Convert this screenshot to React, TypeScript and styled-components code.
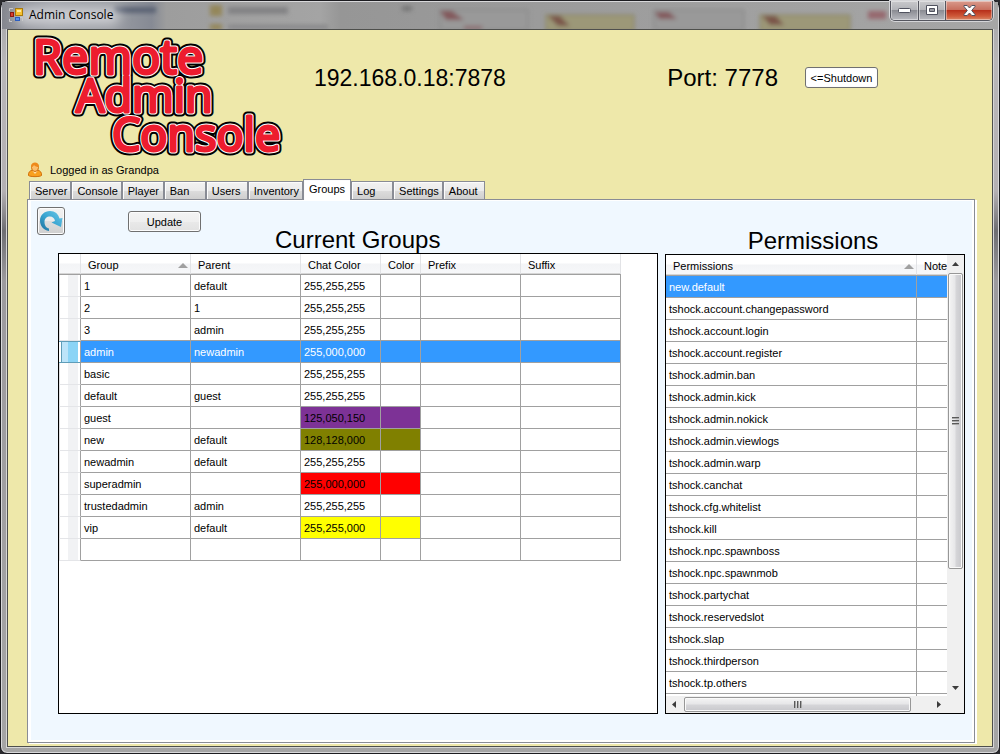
import React, { useState } from "react";
import styled, { createGlobalStyle, css } from "styled-components";

const GlobalStyle = createGlobalStyle`
  *, *::before, *::after { box-sizing: border-box; }
  body {
    margin: 0;
    background: #2a2a2e;
    font: 11px/14px "Liberation Sans", Arial, sans-serif;
    color: #000;
  }
  button { font: inherit; color: inherit; margin: 0; }
`;

const line = "#a0a0a0";

const Window = styled.div`
  position: relative;
  height: 100vh;
  min-height: 480px;
  display: flex;
  flex-direction: column;
  padding: 0 6px 6px;
  border: 1px solid #1c1c20;
  border-radius: 8px 8px 7px 7px;
  box-shadow: inset 0 0 0 1px #d8d8da;
  background: linear-gradient(180deg, #a3a3a5 0, #b8b6b8 60px, #b4b0b3 190px, #6e6e72 230px, #9c9a9e 280px, #a5a5a5 100%);
`;

const TitleBar = styled.header`
  position: relative;
  flex: none;
  height: 28px;
  margin: 0 -5px;
  padding: 0 5px 0 6px;
  display: flex;
  align-items: flex-start;
`;

const Glass = styled.svg`
  position: absolute;
  top: 1px;
  left: 0;
  width: 100%;
  height: 27px;
`;

const AppIcon = styled.svg`
  position: relative;
  width: 16px;
  height: 16px;
  margin-top: 6px;
`;

const WindowTitle = styled.h1`
  position: relative;
  flex: 1;
  margin: 5px 0 0 5px;
  font: 12px/18px "Open Sans", "Noto Sans", sans-serif;
`;

const CaptionButtons = styled.div`
  position: relative;
  display: flex;
  height: 20px;
  border: 1px solid #55565f;
  border-top: 0;
  border-radius: 0 0 5px 5px;
  box-shadow: 0 0 0 1px #d5d5d8;
  overflow: hidden;
`;

const CaptionButton = styled.button<{ $close?: boolean }>`
  display: flex;
  align-items: center;
  justify-content: center;
  width: ${(p) => (p.$close ? 47 : 27)}px;
  height: 19px;
  padding: 0;
  border: 0;
  background: linear-gradient(#c9c9cc 0, #b2b3b8 47%, #8b8c93 50%, #b9bac0 100%);
  box-shadow: inset 0 0 0 1px rgba(255, 255, 255, 0.4);
  & + & { border-left: 1px solid #55565f; }
  ${(p) => p.$close && css`
    background: linear-gradient(#d99a8c 0, #c8705f 45%, #b8311c 50%, #cf5a3a 80%, #d98a6a 100%);
  `}
`;

const Client = styled.main`
  flex: 1;
  min-height: 0;
  display: flex;
  flex-direction: column;
  padding: 0 17px 3px 19px;
  border: 1px solid #4e4f4c;
  box-shadow: 0 0 0 1px #d6d6d6;
  background: #eee8aa;
`;

const Banner = styled.section`
  flex: none;
  display: flex;
  align-items: flex-start;
  padding: 2px 97px 0 5px;
`;

const Logo = styled.svg`
  flex: none;
  width: 254px;
  height: 126px;
  overflow: visible;
  text {
    font-family: "Open Sans", "Noto Sans", sans-serif;
    font-size: 45px;
    font-weight: 400;
  }
  text:first-child { font-size: 47px; }
`;

const Address = styled.div`
  margin: 32px 0 0 28px;
  font-size: 23px;
  line-height: 28px;
`;

const Port = styled.div`
  margin: 32px 27px 0 auto;
  font-size: 24px;
  line-height: 28px;
  white-space: nowrap;
`;

const PushButton = styled.button<{ $light?: boolean }>`
  min-width: 73px;
  height: 21px;
  padding: 0 4px;
  border: 1px solid #707070;
  border-radius: 3px;
  box-shadow: inset 0 0 0 1px #fcfcfc;
  background: ${(p) => (p.$light ? "#fff" : "linear-gradient(#f4f4f4 0, #efefef 50%, #e9e9e9 51%, #e2e2e2 100%)")};
  white-space: nowrap;
`;

const ShutdownButton = styled(PushButton)`
  margin-top: 35px;
`;

const UserLine = styled.div`
  flex: none;
  display: flex;
  align-items: center;
  gap: 7px;
  height: 15px;
  margin-top: 4px;
`;

const Tabs = styled.div`
  flex: none;
  display: flex;
  align-items: flex-end;
  height: 22px;
  padding: 0 2px;
  position: relative;
  z-index: 1;
`;

const Tab = styled.button<{ $active: boolean }>`
  min-width: 42px;
  height: 18px;
  padding: 1px 3px 0 5px;
  border: 1px solid #898c95;
  border-bottom: 0;
  background: linear-gradient(#f2f2f2 0, #ebebeb 50%, #dddddd 51%, #cfcfcf 100%);
  box-shadow: inset 1px 1px 0 #fcfcfc;
  text-align: left;
  line-height: 17px;
  ${(p) => p.$active && css`
    height: 21px;
    padding: 0 5px 2px;
    margin-bottom: -1px;
    background: #fff;
  `}
`;

const TabPage = styled.section`
  flex: 1;
  min-height: 0;
  display: grid;
  grid-template-columns: minmax(0, 621fr) minmax(0, 300fr);
  column-gap: 7px;
  padding: 4px 9px 28px;
  border: 1px solid #898c95;
  box-shadow: inset 3px 0 0 #fff, inset -2px -2px 0 #fff, inset 0 1px 0 #fff, 2px 1px 0 #fff;
  background: #f0f8ff;
`;

const Pane = styled.section`
  min-width: 0;
  min-height: 0;
  display: flex;
  flex-direction: column;
`;

const PaneHead = styled.div<{ $center?: boolean }>`
  flex: none;
  display: flex;
  align-items: flex-start;
  height: 49px;
  padding-top: 3px;
  ${(p) => p.$center && css`
    justify-content: center;
    height: 50px;
    padding-right: 4px;
  `}
`;

const Heading = styled.h2`
  align-self: flex-end;
  margin: 0;
  font-size: 24px;
  line-height: 27px;
  font-weight: 400;
  white-space: nowrap;
`;

const RefreshButton = styled.button`
  width: 28px;
  height: 28px;
  padding: 0;
  display: flex;
  align-items: center;
  justify-content: center;
  border: 1px solid #707070;
  border-radius: 3px;
  box-shadow: inset 0 0 0 1px #fcfcfc;
  background: linear-gradient(#f2f2f2 0, #ebebeb 50%, #dddddd 51%, #cfcfcf 100%);
`;

const UpdateButton = styled(PushButton)`
  margin: 4px 74px 0 63px;
`;

const GridBox = styled.div<{ $indent?: boolean }>`
  flex: 1;
  min-height: 0;
  margin-left: ${(p) => (p.$indent ? 21 : 0)}px;
  border: 1px solid #000;
  background: #fff;
  overflow: hidden;
`;

const DataTable = styled.table<{ $width: number }>`
  width: ${(p) => p.$width}px;
  table-layout: fixed;
  border-collapse: separate;
  border-spacing: 0;
`;

const HeadCell = styled.th`
  position: relative;
  height: 21px;
  padding: 1px 7px 0;
  border-bottom: 1px solid ${line};
  box-shadow: inset -1px 0 0 #e2e3e6, inset 0 -1px 0 #d5d5d5;
  background: linear-gradient(#fff 0, #fff 45%, #f3f4f6 50%, #f7f8fa 100%);
  font-weight: 400;
  text-align: left;
  white-space: nowrap;
`;

const SortMark = styled.svg`
  position: absolute;
  right: 3px;
  top: 9px;
  width: 10px;
  height: 5px;
`;

const RowHead = styled.th<{ $selected?: boolean }>`
  padding: 0;
  border-right: 1px solid ${line};
  border-bottom: 1px solid #e4e5e8;
  background: linear-gradient(90deg, #e0e0e2 0, #e0e0e2 1px, #fff 1px, #fff 9px, #f1f2f4 9px, #f1f2f4 19px, #fff 19px);
  ${(p) => p.$selected && css`
    border-bottom-color: #5f9db8;
    box-shadow: inset 0 1px 0 #5f9db8;
    background: linear-gradient(90deg, #fff 0, #fff 2px, #5f9db8 2px, #5f9db8 3px, #bce4f9 3px, #bce4f9 9px, #8ad4f6 9px, #8ad4f6 19px, #fff 19px);
  `}
`;

const Cell = styled.td<{ $fill?: string }>`
  height: 22px;
  padding: 0 3px;
  border-right: 1px solid ${line};
  border-bottom: 1px solid ${line};
  background: ${(p) => p.$fill ?? "transparent"};
  white-space: nowrap;
`;

const Row = styled.tr<{ $selected?: boolean }>`
  ${(p) => p.$selected && css`
    color: #fff;
    ${Cell} { background: #3399ff; }
  `}
`;

const ScrollArea = styled.div`
  display: grid;
  grid-template-columns: minmax(0, 1fr) 17px;
  grid-template-rows: minmax(0, 1fr) 17px;
  width: 100%;
  height: 100%;
  background: #f0f0f0;
`;

const Viewport = styled.div`
  overflow: hidden;
  background: #fff;
`;

const ScrollBar = styled.div<{ $vertical?: boolean }>`
  display: flex;
  flex-direction: ${(p) => (p.$vertical ? "column" : "row")};
  background: #f0f0f0;
`;

const ArrowButton = styled.button`
  flex: none;
  width: 17px;
  height: 17px;
  padding: 0;
  border: 0;
  display: flex;
  align-items: center;
  justify-content: center;
  background: #f0f0f0;
`;

const Thumb = styled.button<{ $vertical?: boolean; $grow: number }>`
  flex: ${(p) => p.$grow} 1 0;
  margin: 1px;
  padding: 0;
  display: flex;
  align-items: center;
  justify-content: center;
  border: 1px solid #979797;
  border-radius: 2px;
  box-shadow: inset 0 0 0 1px #fafafa;
  background: linear-gradient(${(p) => (p.$vertical ? "90deg" : "180deg")}, #f4f4f4 0, #e6e6e8 48%, #d6d6d9 52%, #c8c8cc 100%);
`;

const Track = styled.div<{ $grow: number }>`
  flex: ${(p) => p.$grow} 1 0;
`;

const tabs = ["Server", "Console", "Player", "Ban", "Users", "Inventory", "Groups", "Log", "Settings", "About"];

type Group = { name: string; parent: string; chat: string; fill?: string };

const groups: Group[] = [
  { name: "1", parent: "default", chat: "255,255,255" },
  { name: "2", parent: "1", chat: "255,255,255" },
  { name: "3", parent: "admin", chat: "255,255,255" },
  { name: "admin", parent: "newadmin", chat: "255,000,000" },
  { name: "basic", parent: "", chat: "255,255,255" },
  { name: "default", parent: "guest", chat: "255,255,255" },
  { name: "guest", parent: "", chat: "125,050,150", fill: "#7d3296" },
  { name: "new", parent: "default", chat: "128,128,000", fill: "#808000" },
  { name: "newadmin", parent: "default", chat: "255,255,255" },
  { name: "superadmin", parent: "", chat: "255,000,000", fill: "#ff0000" },
  { name: "trustedadmin", parent: "admin", chat: "255,255,255" },
  { name: "vip", parent: "default", chat: "255,255,000", fill: "#ffff00" },
  { name: "", parent: "", chat: "" },
];

const permissions = [
  "new.default", "tshock.account.changepassword", "tshock.account.login", "tshock.account.register",
  "tshock.admin.ban", "tshock.admin.kick", "tshock.admin.nokick", "tshock.admin.viewlogs",
  "tshock.admin.warp", "tshock.canchat", "tshock.cfg.whitelist", "tshock.kill",
  "tshock.npc.spawnboss", "tshock.npc.spawnmob", "tshock.partychat", "tshock.reservedslot",
  "tshock.slap", "tshock.thirdperson", "tshock.tp.others", "",
];

const Sort = () => (
  <SortMark viewBox="0 0 10 5" aria-hidden="true">
    <path d="M5 0 10 5H0z" fill="#a0a0a0" />
  </SortMark>
);

const Arrow = ({ d }: { d: string }) => (
  <svg width="9" height="9" viewBox="0 0 9 9" aria-hidden="true">
    <path d={d} fill="#3c3c3c" />
  </svg>
);

const Grip = ({ vertical }: { vertical?: boolean }) => (
  <svg width="8" height="8" viewBox="0 0 8 8" aria-hidden="true">
    <path
      d={vertical ? "M0 .5h7M0 3.5h7M0 6.5h7" : "M.5 0v7M3.5 0v7M6.5 0v7"}
      stroke="#5a5a5a"
    />
    <path
      d={vertical ? "M0 1.5h7M0 4.5h7M0 7.5h7" : "M1.5 0v7M4.5 0v7M7.5 0v7"}
      stroke="#aaa"
    />
  </svg>
);

function TitleGlass() {
  return (
    <Glass aria-hidden="true">
      <defs>
        <linearGradient id="base" x1="0" x2="1" y1="0" y2="0">
          <stop offset="0" stopColor="#85878f" />
          <stop offset="0.05" stopColor="#a3a5ac" />
          <stop offset="0.11" stopColor="#9a9da3" />
          <stop offset="0.15" stopColor="#868a94" />
          <stop offset="0.165" stopColor="#9d9d9d" />
          <stop offset="0.32" stopColor="#a4a4a4" />
          <stop offset="0.34" stopColor="#969696" />
          <stop offset="0.7" stopColor="#9f9f9f" />
          <stop offset="1" stopColor="#a6a6a6" />
        </linearGradient>
        <filter id="soft" x="-20%" y="-60%" width="140%" height="220%">
          <feGaussianBlur stdDeviation="2" />
        </filter>
        <filter id="glow" x="-20%" y="-60%" width="140%" height="220%">
          <feGaussianBlur stdDeviation="6" />
        </filter>
      </defs>
      <rect width="100%" height="27" fill="url(#base)" />
      <rect x="112" y="5" width="42" height="6" fill="#5c6474" filter="url(#soft)" />
      <rect x="14" y="6" width="104" height="16" rx="8" fill="#cfd0d4" filter="url(#glow)" />
      <g filter="url(#soft)">
        <rect x="208" y="3" width="12" height="11" fill="#94875a" />
        <rect x="208" y="22" width="12" height="6" fill="#94875a" />
        <rect x="226" y="5" width="60" height="7" fill="#828284" />
        <rect x="226" y="23" width="100" height="4" fill="#858587" />
        <rect x="400" y="4" width="10" height="5" fill="#777" />
        <rect x="438" y="8" width="88" height="20" fill="#999" stroke="#808080" />
        <path d="M438 9h12l12 9h-18z" fill="#83585c" />
        <rect x="462" y="24" width="18" height="3" fill="#8c6468" />
        <rect x="544" y="13" width="88" height="16" fill="#9c9878" stroke="#827c5a" />
        <path d="M546 14h12l10 10h-12z" fill="#7a5448" />
        <rect x="652" y="8" width="90" height="20" fill="#999" stroke="#808080" />
        <path d="M653 10h14l8 7h-18z" fill="#83585c" />
        <rect x="758" y="13" width="90" height="16" fill="#9c9878" stroke="#827c5a" />
        <path d="M760 14h14l8 9h-14z" fill="#7a5448" />
        <rect x="866" y="9" width="18" height="8" fill="#96686e" />
      </g>
    </Glass>
  );
}

export default function App() {
  const [active, setActive] = useState("Groups");

  return (
    <>
      <GlobalStyle />
      <Window>
        <TitleBar>
          <TitleGlass />
          <AppIcon viewBox="0 0 16 16" aria-hidden="true">
            <path d="M1.500 4V1.500H5M1.500 12v2.500H4M12 10.500h2.500V14" fill="none" stroke="#c9c9c9" />
            <rect x="7.500" y="1.500" width="7" height="7" fill="#f6c12f" stroke="#a97a0c" />
            <rect x="9" y="3" width="4" height="2" fill="#ffe9a0" />
            <rect x="2.500" y="5.500" width="3" height="4" fill="#d8402f" stroke="#8d1a12" />
            <rect x="7.500" y="10.500" width="4" height="3" fill="#5b93e8" stroke="#2d5ec0" />
          </AppIcon>
          <WindowTitle>Admin Console</WindowTitle>
          <CaptionButtons>
            <CaptionButton type="button" aria-label="Minimize">
              <svg width="13" height="6" viewBox="0 0 13 6" aria-hidden="true">
                <rect x="0.500" y="0.500" width="12" height="4" rx="1" fill="#fff" stroke="#50525f" />
              </svg>
            </CaptionButton>
            <CaptionButton type="button" aria-label="Maximize">
              <svg width="13" height="11" viewBox="0 0 13 11" aria-hidden="true">
                <path d="M.5.500h11v9H.5z" fill="#fff" stroke="#50525f" />
                <path d="M3.500 3.500h5v3h-5z" fill="#9a9ba2" stroke="#50525f" />
              </svg>
            </CaptionButton>
            <CaptionButton type="button" $close aria-label="Close">
              <svg width="13" height="11" viewBox="0 0 13 11" aria-hidden="true">
                <path d="M1 .5h3.200L6.500 3 8.800.5H12v1L8.700 5.500 12 9.500v1H8.800L6.500 8l-2.300 2.500H1v-1l3.300-4L1 1.500z" fill="#fff" stroke="#50525f" />
              </svg>
            </CaptionButton>
          </CaptionButtons>
        </TitleBar>

        <Client>
          <Banner>
            <Logo viewBox="0 0 254 126" role="img" aria-label="Remote Admin Console">
              <defs>
                <g id="wordmark">
                  <text x="1" y="42">Remote</text>
                  <text x="44" y="80">Admin</text>
                  <text x="80" y="119">Console</text>
                </g>
              </defs>
              <g strokeLinejoin="round">
                <use href="#wordmark" fill="#000" stroke="#000" strokeWidth="9" />
                <use href="#wordmark" fill="#fff" stroke="#fff" strokeWidth="5" />
                <use href="#wordmark" fill="#ed1c2e" stroke="#ed1c2e" strokeWidth="3" />
              </g>
            </Logo>
            <Address>192.168.0.18:7878</Address>
            <Port>Port: 7778</Port>
            <ShutdownButton type="button" $light>&lt;=Shutdown</ShutdownButton>
          </Banner>

          <UserLine>
            <svg width="16" height="16" viewBox="0 0 16 16" aria-hidden="true">
              <path d="M1.500 13.500c-.5-3 1.500-5 4-5.500h5c2.500.5 4.500 2.500 4 5.500-1.500 1.500-11.500 1.500-13 0z" fill="#f9a01f" stroke="#d0700c" />
              <path d="M5.500 9 8 12l2.500-3z" fill="#ffe2ae" />
              <ellipse cx="8" cy="5.500" rx="3.500" ry="4" fill="#fcbf6c" stroke="#d0700c" />
              <path d="M4 5c-.5-6 8.500-6 8 0-2 0-4-.5-5-2C6.500 4 5.500 5 4 5z" fill="#ee8a1c" />
            </svg>
            Logged in as Grandpa
          </UserLine>

          <Tabs role="tablist">
            {tabs.map((t) => (
              <Tab key={t} type="button" role="tab" aria-selected={t === active} $active={t === active} onClick={() => setActive(t)}>
                {t}
              </Tab>
            ))}
          </Tabs>

          <TabPage>
            <Pane>
              <PaneHead>
                <RefreshButton type="button" aria-label="Refresh">
                  <svg width="26" height="26" viewBox="0 0 26 26" aria-hidden="true">
                    <defs>
                      <linearGradient id="arc" x1="0" x2="1" y1="1" y2="0">
                        <stop offset="0" stopColor="#1b6f9c" />
                        <stop offset="0.5" stopColor="#3ba6d2" />
                        <stop offset="1" stopColor="#6cc8e8" />
                      </linearGradient>
                    </defs>
                    <path
                      d="M11 23C5.500 22 2 18 2 12.500 2 7 6.500 3 12 3c5 0 8.500 3 9.500 7.500l3-.5-1.500 9-9.500-4.500 3.500-1.500c-.5-3-2.500-4.500-5-4.500-3.300 0-5.500 2-5.500 5.500 0 3.500 2 6 4.500 6.500z"
                      fill="url(#arc)"
                    />
                  </svg>
                </RefreshButton>
                <UpdateButton type="button">Update</UpdateButton>
                <Heading>Current Groups</Heading>
              </PaneHead>
              <GridBox $indent>
                <DataTable $width={562}>
                  <colgroup>
                    {[22, 110, 110, 80, 40, 100, 100].map((w, i) => (
                      <col key={i} width={w} />
                    ))}
                  </colgroup>
                  <thead>
                    <tr>
                      <HeadCell aria-label="Row" />
                      <HeadCell scope="col" aria-sort="ascending">Group<Sort /></HeadCell>
                      <HeadCell scope="col">Parent</HeadCell>
                      <HeadCell scope="col">Chat Color</HeadCell>
                      <HeadCell scope="col">Color</HeadCell>
                      <HeadCell scope="col">Prefix</HeadCell>
                      <HeadCell scope="col">Suffix</HeadCell>
                    </tr>
                  </thead>
                  <tbody>
                    {groups.map((g) => (
                      <Row key={g.name} $selected={g.name === "admin"}>
                        <RowHead $selected={g.name === "admin"} />
                        <Cell>{g.name}</Cell>
                        <Cell>{g.parent}</Cell>
                        <Cell $fill={g.fill}>{g.chat}</Cell>
                        <Cell $fill={g.fill} />
                        <Cell />
                        <Cell />
                      </Row>
                    ))}
                  </tbody>
                </DataTable>
              </GridBox>
            </Pane>

            <Pane>
              <PaneHead $center>
                <Heading>Permissions</Heading>
              </PaneHead>
              <GridBox>
                <ScrollArea>
                  <Viewport>
                    <DataTable $width={351}>
                      <colgroup>
                        <col width={251} />
                        <col width={100} />
                      </colgroup>
                      <thead>
                        <tr>
                          <HeadCell scope="col" aria-sort="ascending">Permissions<Sort /></HeadCell>
                          <HeadCell scope="col">Note</HeadCell>
                        </tr>
                      </thead>
                      <tbody>
                        {permissions.map((p, i) => (
                          <Row key={p} $selected={i === 0}>
                            <Cell>{p}</Cell>
                            <Cell />
                          </Row>
                        ))}
                      </tbody>
                    </DataTable>
                  </Viewport>
                  <ScrollBar $vertical>
                    <ArrowButton type="button" aria-label="Scroll up"><Arrow d="M4.500 3 8 7H1z" /></ArrowButton>
                    <Thumb type="button" aria-label="Vertical position" $vertical $grow={297}><Grip vertical /></Thumb>
                    <Track $grow={110} />
                    <ArrowButton type="button" aria-label="Scroll down"><Arrow d="M1 3h7L4.500 7z" /></ArrowButton>
                  </ScrollBar>
                  <ScrollBar>
                    <ArrowButton type="button" aria-label="Scroll left"><Arrow d="M6 1v7L2 4.500z" /></ArrowButton>
                    <Thumb type="button" aria-label="Horizontal position" $grow={228}><Grip /></Thumb>
                    <Track $grow={18} />
                    <ArrowButton type="button" aria-label="Scroll right"><Arrow d="M3 1l4 3.500L3 8z" /></ArrowButton>
                  </ScrollBar>
                </ScrollArea>
              </GridBox>
            </Pane>
          </TabPage>
        </Client>
      </Window>
    </>
  );
}
